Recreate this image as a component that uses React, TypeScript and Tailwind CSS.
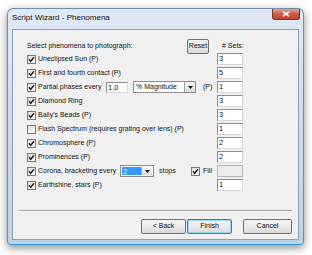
import React from "react";

function Check({ checked = true }: { checked?: boolean }) {
  return (
    <svg width="9" height="9" viewBox="0 0 9 9" className="shrink-0 block">
      <defs>
        <linearGradient id="cbg" x1="0" y1="0" x2="1" y2="1">
          <stop offset="0" stopColor="#dcdcdc" />
          <stop offset="1" stopColor="#ffffff" />
        </linearGradient>
      </defs>
      <rect x="0.5" y="0.5" width="8" height="8" fill="url(#cbg)" stroke="#7a7a7a" />
      {checked && (
        <path d="M2 4.3 L3.7 6.3 L7 2.3" fill="none" stroke="#1e1e1e" strokeWidth="1.4" />
      )}
    </svg>
  );
}

function NumBox({ value, disabled = false }: { value: string; disabled?: boolean }) {
  return (
    <div
      className={
        disabled
          ? "w-[26px] h-[12px] border border-[#b5b5b5] bg-[#ececec]"
          : "w-[26px] h-[12px] border border-[#8c8c8c] border-b-[#d6d6d6] border-r-[#d6d6d6] bg-white text-[7.5px] leading-[10px] pl-[1px]"
      }
    >
      {value}
    </div>
  );
}

function Arrow() {
  return (
    <div className="w-[11px] h-full border-l border-[#a0a0a0] bg-gradient-to-b from-[#f7f7f7] to-[#dcdcdc] flex items-center justify-center">
      <svg width="5" height="3" viewBox="0 0 5 3">
        <path d="M0 0 H5 L2.5 3 Z" fill="#111" />
      </svg>
    </div>
  );
}

type Row = { label: string; value: string; checked?: boolean; kind?: "partial" | "corona" };

const rows: Row[] = [
  { label: "Uneclipsed Sun (P)", value: "3" },
  { label: "First and fourth contact (P)", value: "5" },
  { label: "Partial phases every", value: "1", kind: "partial" },
  { label: "Diamond Ring", value: "3" },
  { label: "Baily's Beads (P)", value: "3" },
  { label: "Flash Spectrum (requires grating over lens) (P)", value: "1", checked: false },
  { label: "Chromosphere (P)", value: "2" },
  { label: "Prominences (P)", value: "2" },
  { label: "Corona, bracketing every", value: "", kind: "corona" },
  { label: "Earthshine, stars (P)", value: "1" },
];

function Btn({ children, w, def = false }: { children: React.ReactNode; w: string; def?: boolean }) {
  return (
    <div
      className={
        "h-[15px] rounded-[2px] border flex items-center justify-center text-[7px] bg-gradient-to-b from-[#f4f4f4] via-[#ebebeb] to-[#d8d8d8] " +
        (def ? "border-[#3c7fb1] shadow-[inset_0_0_0_1px_#9bd3f2] " : "border-[#707070] ") +
        w
      }
    >
      {children}
    </div>
  );
}

export default function App() {
  return (
    <div
      className="w-[312px] h-[255px] bg-white pt-[8px] pl-[7px] overflow-hidden text-[#111]"
      style={{ fontFamily: '"Liberation Sans", Arial, sans-serif' }}
    >
      <div className="w-[297px] h-[237px] rounded-t-[6px] rounded-b-[4px] border border-[#6f8ca8] border-b-[#2f9bd3] bg-gradient-to-b from-[#dfeaf6] via-[#cbdcee] to-[#bcd3ea] shadow-[0_3px_9px_rgba(0,0,0,0.45)] flex flex-col px-[4px] pb-[4px]">
        <div className="h-[20px] flex items-start justify-between">
          <div className="text-[8px] leading-[10px] mt-[4px] text-[#111]">Script Wizard - Phenomena</div>
          <div className="w-[28px] h-[11px] mr-[-1px] rounded-b-[3px] border border-t-0 border-[#7a2f28] bg-gradient-to-b from-[#e8a496] via-[#cc5a48] to-[#c0432f] flex items-center justify-center">
            <svg width="8" height="6" viewBox="0 0 8 6">
              <path d="M1 0.8 L7 5.2 M7 0.8 L1 5.2" stroke="#fff" strokeWidth="1.6" />
            </svg>
          </div>
        </div>
        <div className="flex-1 bg-[#f0f0f0] border border-[#8aa0b6] flex flex-col">
          <div className="pl-[14px] w-[230px]">
            <div className="h-[13px] mt-[10px] flex items-center text-[7px]">
              <div className="flex-1 whitespace-nowrap">Select phenomena to photograph:</div>
              <Btn w="w-[22px] mr-[8px]">Reset</Btn>
              <div className="w-[26px] pl-[5px] whitespace-nowrap">
                # Sets:
              </div>
            </div>
            {rows.map((r, i) => (
              <div key={i} className="h-[14px] flex items-start text-[7px]">
                <div className="flex-1 h-[12px] flex items-center whitespace-nowrap">
                  <Check checked={r.checked !== false} />
                  {r.kind === "partial" ? (
                    <>
                      <span className="ml-[2px] w-[68px]">{r.label}</span>
                      <div className="w-[22px] h-[11px] border border-[#8c8c8c] border-b-[#d6d6d6] border-r-[#d6d6d6] bg-white text-[7.5px] leading-[9px] pl-[1px]">
                        1.0
                      </div>
                      <div className="ml-[5px] w-[63px] h-[12px] border border-[#8c8c8c] bg-white flex items-center">
                        <span className="flex-1 pl-[2px]">% Magnitude</span>
                        <Arrow />
                      </div>
                      <span className="ml-[7px]">(P)</span>
                    </>
                  ) : r.kind === "corona" ? (
                    <>
                      <span className="ml-[2px] w-[82px]">{r.label}</span>
                      <div className="w-[34px] h-[12px] border border-[#8c8c8c] bg-white flex items-center p-[1px]">
                        <span className="flex-1 h-full bg-[#3399ff] text-white text-[7.5px] leading-[9px] pl-[1px]">2</span>
                        <Arrow />
                      </div>
                      <span className="ml-[5px] w-[32px]">stops</span>
                      <Check />
                      <span className="ml-[3px]">Fill</span>
                    </>
                  ) : (
                    <span className="ml-[2px]">{r.label}</span>
                  )}
                </div>
                <NumBox value={r.value} disabled={r.kind === "corona"} />
              </div>
            ))}
          </div>
          <div className="mt-[17px] mx-[6px] border-t border-[#a0a0a0] border-b border-b-white" />
          <div className="mt-[7px] mr-[6px] flex justify-end">
            <Btn w="w-[45px]">&lt; Back</Btn>
            <Btn w="w-[45px] ml-[1px]" def>
              Finish
            </Btn>
            <Btn w="w-[49px] ml-[11px]">Cancel</Btn>
          </div>
        </div>
      </div>
    </div>
  );
}
